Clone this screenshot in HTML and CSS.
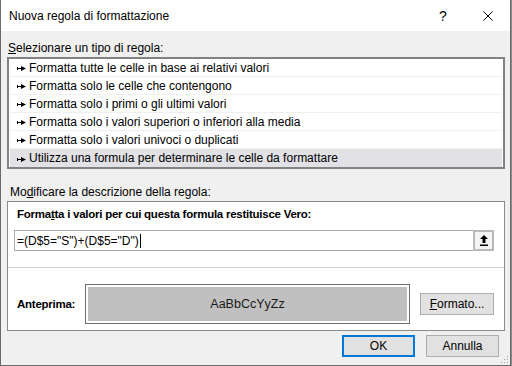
FILE: index.html
```html
<!DOCTYPE html>
<html lang="it">
<head>
    <meta charset="UTF-8">
    <title>Nuova regola di formattazione</title>
    <link rel="stylesheet" href="styles.css">
</head>
<body>
<div class="dialog">
    <div class="titlebar">
        <span class="title">Nuova regola di formattazione</span>
        <span class="help">?</span>
        <span class="close">
            <svg width="10" height="10" viewBox="0 0 10 10"><path d="M0.5 0.5L9.5 9.5M9.5 0.5L0.5 9.5" stroke="#000" stroke-width="1" fill="none"/></svg>
        </span>
    </div>
    <div class="content">
        <div class="label"><u>S</u>elezionare un tipo di regola:</div>
        <ul class="rules">
            <li><svg class="bullet" width="9" height="5" viewBox="0 0 9 5"><path d="M0 1h1v3h-1zM1 2h4v1h-4zM4 0L9 2.5L4 5z" fill="#000"/></svg>Formatta tutte le celle in base ai relativi valori</li>
            <li><svg class="bullet" width="9" height="5" viewBox="0 0 9 5"><path d="M0 1h1v3h-1zM1 2h4v1h-4zM4 0L9 2.5L4 5z" fill="#000"/></svg>Formatta solo le celle che contengono</li>
            <li><svg class="bullet" width="9" height="5" viewBox="0 0 9 5"><path d="M0 1h1v3h-1zM1 2h4v1h-4zM4 0L9 2.5L4 5z" fill="#000"/></svg>Formatta solo i primi o gli ultimi valori</li>
            <li><svg class="bullet" width="9" height="5" viewBox="0 0 9 5"><path d="M0 1h1v3h-1zM1 2h4v1h-4zM4 0L9 2.5L4 5z" fill="#000"/></svg>Formatta solo i valori superiori o inferiori alla media</li>
            <li><svg class="bullet" width="9" height="5" viewBox="0 0 9 5"><path d="M0 1h1v3h-1zM1 2h4v1h-4zM4 0L9 2.5L4 5z" fill="#000"/></svg>Formatta solo i valori univoci o duplicati</li>
            <li class="selected"><svg class="bullet" width="9" height="5" viewBox="0 0 9 5"><path d="M0 1h1v3h-1zM1 2h4v1h-4zM4 0L9 2.5L4 5z" fill="#000"/></svg>Utilizza una formula per determinare le celle da formattare</li>
        </ul>
        <div class="label label-desc">Mo<u>d</u>ificare la descrizione della regola:</div>
        <div class="desc">
            <div class="desc-title">Forma<u>t</u>ta i valori per cui questa formula restituisce Vero:</div>
            <div class="formula">
                <span class="formula-text">=(D$5="S")+(D$5="D")<span class="caret"></span></span>
                <span class="ref-btn">
                    <svg width="8" height="11" viewBox="0 0 8 11"><path d="M4 0L8 4H5.5V8H2.5V4H0z M0 9.5h8v1.5h-8z" fill="#000"/></svg>
                </span>
            </div>
            <div class="divider"></div>
            <div class="preview-row">
                <span class="preview-label">Anteprima:</span>
                <div class="preview"><div class="preview-fill">AaBbCcYyZz</div></div>
                <button class="btn btn-format"><u>F</u>ormato...</button>
            </div>
        </div>
        <div class="actions">
            <button class="btn btn-default">OK</button>
            <button class="btn">Annulla</button>
        </div>
    </div>
    <svg class="grip" width="8" height="8" viewBox="0 0 8 8">
        <rect x="6" y="0" width="1" height="1" fill="#9a9a9a"/>
        <rect x="3" y="3" width="1" height="1" fill="#9a9a9a"/>
        <rect x="6" y="3" width="1" height="1" fill="#9a9a9a"/>
        <rect x="0" y="6" width="1" height="1" fill="#9a9a9a"/>
        <rect x="3" y="6" width="1" height="1" fill="#9a9a9a"/>
        <rect x="6" y="6" width="1" height="1" fill="#9a9a9a"/>
    </svg>
</div>
</body>
</html>
```

FILE: styles.css
```css
body {
    margin: 0;
    background: repeating-linear-gradient(90deg, #3a3a3a 0 2px, #8a8a8a 2px 4px);
    font-family: "Liberation Sans", Arial, sans-serif;
    font-size: 12px;
    color: #000;
}

.dialog {
    position: relative;
    width: 509px;
    height: 365px;
    border-left: 1px solid #6a6a6a;
    border-right: 1px solid #6a6a6a;
    border-bottom: 1px solid #6a6a6a;
    background: #f0f0f0;
}

.titlebar {
    display: flex;
    align-items: center;
    height: 31px;
    background: #fff;
}

.title {
    flex: 1;
    padding-left: 8px;
    line-height: 32px;
}

.help {
    width: 46px;
    text-align: center;
    font-size: 14px;
    padding-left: 4px;
    box-sizing: border-box;
}

.close {
    display: flex;
    justify-content: center;
    align-items: center;
    width: 46px;
    padding-left: 2px;
    box-sizing: border-box;
}

.content {
    padding: 9px 5px 0 6px;
}

.label {
    line-height: 16px;
    margin-bottom: 1px;
    padding-left: 1px;
}

.label-desc {
    margin-top: 15px;
    padding-left: 3px;
}

.rules {
    list-style: none;
    margin: 0;
    padding: 0;
    border: 2px solid #828282;
    background: #fff;
}

.rules li {
    display: flex;
    align-items: center;
    height: 17px;
    border-bottom: 1px solid #f0f0f0;
    margin: 0 1px;
    padding-left: 7px;
}

.rules li:last-child {
    border-bottom: 0;
    height: 18px;
}

.rules li.selected {
    background: #e1e1e6;
}

.bullet {
    margin: 2px 3px 0 0;
}

.desc {
    border: 1px solid #8a8a8a;
    background: #fff;
    padding: 4px 0 6px;
}

.desc-title {
    font-weight: bold;
    font-size: 11.5px;
    letter-spacing: -0.25px;
    line-height: 16px;
    padding-left: 9px;
}

.formula {
    display: flex;
    height: 21px;
    margin: 8px 10px 0 6px;
    border: 1px solid #acacac;
    box-sizing: border-box;
}

.formula-text {
    flex: 1;
    display: flex;
    align-items: center;
    padding-left: 2px;
}

.caret {
    display: inline-block;
    width: 1px;
    height: 14px;
    margin-left: 1px;
    background: #000;
}

.ref-btn {
    display: flex;
    justify-content: center;
    align-items: center;
    width: 21px;
    margin: -1px -1px -1px 0;
    border: 2px solid #b9b9b9;
    background: #f4f4f4;
    box-sizing: border-box;
}

.divider {
    height: 1px;
    margin-top: 16px;
    background: #cfcfcf;
}

.preview-row {
    display: flex;
    align-items: center;
    margin-top: 16px;
    padding-left: 9px;
}

.preview-label {
    flex: 0 0 68px;
    font-weight: bold;
    font-size: 11.5px;
    letter-spacing: -0.25px;
}

.preview {
    width: 325px;
    height: 40px;
    border: 1px solid #6d6d6d;
    padding: 2px;
    box-sizing: border-box;
    background: #fff;
}

.preview-fill {
    height: 100%;
    display: flex;
    justify-content: center;
    align-items: center;
    background: #c0c0c0;
    font-size: 12.5px;
    color: #1a1a1a;
}

.btn {
    height: 22px;
    width: 73px;
    border: 1px solid #adadad;
    background: #e1e1e1;
    font-family: inherit;
    font-size: 12px;
    color: #000;
    padding: 0;
}

.btn-format {
    margin-left: 10px;
    width: 74px;
}

.btn-default {
    border: 2px solid #0078d7;
}

.actions {
    display: flex;
    justify-content: flex-end;
    gap: 11px;
    margin-top: 4px;
    padding-right: 6px;
}

.grip {
    position: absolute;
    right: 1px;
    bottom: 1px;
}
```
